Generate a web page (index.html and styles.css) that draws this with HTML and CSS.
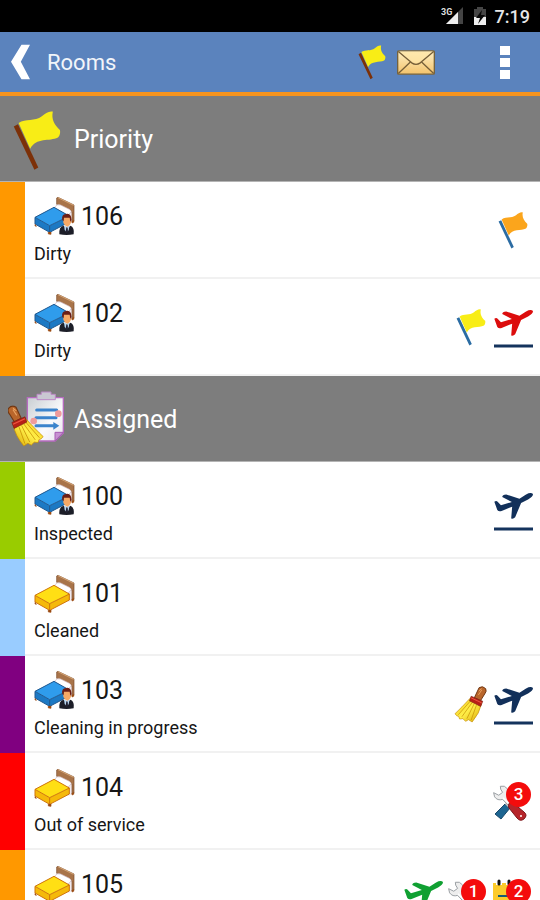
FILE: index.html
```html
<!DOCTYPE html>
<html lang="en">
<head>
<meta charset="utf-8">
<meta name="viewport" content="width=device-width, initial-scale=1">
<title>Rooms</title>
<link rel="stylesheet" href="styles.css">
</head>
<body>
<svg class="defs" aria-hidden="true">
  <defs>
    <linearGradient id="paper" x1="0" y1="0" x2="0" y2="1"><stop offset="0" stop-color="#fff0c4"/><stop offset="1" stop-color="#f3c36c"/></linearGradient>
    <linearGradient id="board" x1="0" y1="0" x2="1" y2="1"><stop offset="0" stop-color="#c9ced2"/><stop offset=".6" stop-color="#fafafc"/><stop offset="1" stop-color="#e8e4ee"/></linearGradient>
    <linearGradient id="straw" x1="0" y1="0" x2="1" y2="1"><stop offset="0" stop-color="#f0c010"/><stop offset=".5" stop-color="#fff04a"/><stop offset="1" stop-color="#d9a400"/></linearGradient>
    <symbol id="flag" viewBox="36 320 150 186">
      <path class="pole" d="M39 371l13-7 63 134-12 7z"/>
      <path class="cloth" d="M54 360C76 345 104 356 126 339C137 330 148 322 160 325C155 350 165 366 182 382C184 390 182 400 176 405C150 418 108 404 90 440Z"/>
    </symbol>
    <symbol id="bed" viewBox="0 0 126 120">
      <path d="M60 36l12-12 44 22 2 30-14 8z" fill="#f1e9ee"/>
      <path d="M68 6l4-2 48 23v49l-6 2V48L68 25z" fill="#a8744a" stroke="#7c4c2a" stroke-width="2"/>
      <path d="M72 5l47 23" stroke="#d8a878" stroke-width="3"/>
      <path d="M62 33q8-10 18-6l26 13q10 6 2 12l-8 6-36-18z" fill="#fff" stroke="#cdb7c1" stroke-width="2"/>
      <path class="side" d="M3 64l44 25 59-29v18l-59 31L3 84z"/>
      <path class="sheet" d="M3 64l57-30 46 26-59 29z"/>
      <path class="edge" d="M3 64l57-30 46 26-59 29zM3 64v20l44 25 59-31V60M47 89v20" fill="none" stroke-width="3"/>
      <path d="M3 85v5l5 1M43 108v6l8 1v-7M114 75v6l5-2v-6" fill="#9b4b12" stroke="#9b4b12" stroke-width="2"/>
    </symbol>
    <symbol id="guest" viewBox="0 0 48 66">
      <path d="M2 64Q0 42 14 38l10 8 12-8q12 6 9 26-21 4-43 0z" fill="#1c1e28"/>
      <path d="M16 37l8 4 9-4-3 15-6 6-6-7z" fill="#b8d5ef"/>
      <path d="M23 43l4 1 1 12-4 4-3-4z" fill="#223"/>
      <path d="M14 12Q24 4 36 12l1 16q-3 11-11 13-9-2-12-13z" fill="#f6a965"/>
      <path d="M11 22Q7 4 22 3q16-4 17 19l-4 4-2-12q-10 1-17 0l-1 10z" fill="#6b1f17"/>
    </symbol>
    <symbol id="plane" viewBox="0 0 118 82">
      <path d="M1 28q6-5 10 0l10 11 33-10L25 14q0-8 12-8l40 13L97 6q15-8 21-1 0 9-15 16L82 32 64 75q-5 6-12 4l3-36-32 13q-9 3-13-3z"/>
    </symbol>
    <symbol id="broom" viewBox="0 0 100 112">
      <path d="M76 5q11-7 20 3 4 8-3 16L80 45 62 35z" fill="#b9662b" stroke="#703713" stroke-width="3"/>
      <path d="M75 15l9-7M74 27l10-15" stroke="#eaa261" stroke-width="3"/>
      <path d="M49 37Q22 66 3 84q5 8 11 8l3 8 10-1 8 8 9-5 11 7Q78 82 83 54z" fill="url(#straw)" stroke="#c58e09" stroke-width="2"/>
      <path d="M55 50L24 93M61 54L39 99M68 58L52 103M50 45L13 87" stroke="#c38a00" stroke-width="2"/>
      <path d="M52 31l35 15-6 16-34-17z" fill="#b91f17" stroke="#7d2312" stroke-width="2"/>
      <path d="M52 36l32 15" stroke="#ef5842" stroke-width="3"/>
    </symbol>
    <symbol id="wrench" viewBox="0 0 100 100">
      <path d="M23 4Q37 0 45 12q4 12-2 20L83 72l-13 14L30 45q-16 5-25-8L2 24l16 8 12-9-6-10z" fill="#eee" stroke="#969ca0" stroke-width="3"/>
      <path d="M31 40l43 43" stroke="#fff" stroke-width="4"/>
    </symbol>
  </defs>
</svg>

<div class="app">
  <div class="status">
    <svg class="signal" viewBox="0 0 24 20" role="img" aria-label="3G signal">
      <path d="M22 1v17H5z" fill="#444"/><path d="M17 6v12H5z" fill="#eee"/>
      <text x="0" y="9" class="network">3G</text>
    </svg>
    <svg class="battery" viewBox="0 0 14 20" role="img" aria-label="Battery charging">
      <path d="M4 1h6v2h3v16H1V3h3z" fill="#454545"/><path d="M1 11h12v8H1z" fill="#eee"/><path d="M9 4L3 12h4l-2 6 7-9H8z" fill="#080808"/>
    </svg>
    <time>7:19</time>
  </div>

  <header class="bar">
    <button class="back" aria-label="Back"><svg viewBox="0 0 58 106"><path d="M32 0h26L30 52l28 54H32L0 52z" fill="#fff"/></svg></button>
    <h1>Rooms</h1>
    <button class="tool" aria-label="Priority"><svg class="flag-small yellow brown"><use href="#flag"/></svg></button>
    <button class="tool" aria-label="Messages">
      <svg class="mail" viewBox="0 0 114 74">
        <rect x="2" y="2" width="110" height="70" rx="3" fill="url(#paper)" stroke="#74623e" stroke-width="4"/>
        <path d="M8 4h98L69 34q-12 9-24 0z" fill="#ffe5a5" opacity=".7"/>
        <path d="M4 70l37-35M110 70L73 35M4 4l40 34q13 9 26 0l40-34" fill="none" stroke="#765f38" stroke-width="4"/>
      </svg>
    </button>
    <button class="tool menu" aria-label="More options"><svg viewBox="0 0 10 33"><path d="M0 0h10v9H0zM0 12h10v9H0zM0 24h10v9H0z" fill="#fff"/></svg></button>
  </header>

  <main class="list">
    <section>
      <h2 class="group"><svg class="group-icon yellow brown"><use href="#flag"/></svg>Priority</h2>
      <ul>
        <li class="room orange">
          <div class="info">
            <h3><svg class="bed blue" viewBox="0 0 126 120"><use href="#bed" width="126" height="120"/><use href="#guest" x="74" y="50" width="48" height="68"/></svg>106</h3>
            <p>Dirty</p>
          </div>
          <div class="marks"><svg class="mark amber steel"><use href="#flag" x="6" y="0" width="30" height="38"/></svg></div>
        </li>
        <li class="room orange">
          <div class="info">
            <h3><svg class="bed blue" viewBox="0 0 126 120"><use href="#bed" width="126" height="120"/><use href="#guest" x="74" y="50" width="48" height="68"/></svg>102</h3>
            <p>Dirty</p>
          </div>
          <div class="marks">
            <svg class="mark yellow steel"><use href="#flag" x="9" y="0" width="30" height="38"/></svg>
            <svg class="mark leaving"><use href="#plane" x="2" y="1" width="39" height="28"/><path class="runway" d="M2 38h39"/></svg>
          </div>
        </li>
      </ul>
    </section>

    <section>
      <h2 class="group">
        <svg class="group-icon" viewBox="0 0 174 174">
          <path d="M58 20h108v106l-25 24H58z" fill="url(#board)" stroke="#b66bc0" stroke-width="4"/>
          <path d="M141 150v-26h25z" fill="#c791d2" stroke="#a65cb2" stroke-width="3"/>
          <path d="M87 26V10h13V3h29v7h13v16z" fill="#c9c7d2" stroke="#bc88c6" stroke-width="3"/>
          <path d="M86 57h60M84 80h60M84 104h55" fill="none" stroke="#3b83cc" stroke-width="9" stroke-linecap="round"/>
          <path d="M136 93l18 11-18 12z" fill="#3b83cc"/>
          <circle cx="151" cy="68" r="10" fill="#ef9b9b"/><circle cx="77" cy="90" r="10" fill="#ef9b9b"/>
          <use href="#broom" width="112" height="125" transform="translate(109 43) scale(-1 1)"/>
        </svg>
        Assigned
      </h2>
      <ul>
        <li class="room green">
          <div class="info">
            <h3><svg class="bed blue" viewBox="0 0 126 120"><use href="#bed" width="126" height="120"/><use href="#guest" x="74" y="50" width="48" height="68"/></svg>100</h3>
            <p>Inspected</p>
          </div>
          <div class="marks"><svg class="mark away"><use href="#plane" x="2" y="1" width="39" height="28"/><path class="runway" d="M2 38h39"/></svg></div>
        </li>
        <li class="room sky">
          <div class="info">
            <h3><svg class="bed gold" viewBox="0 0 126 120"><use href="#bed" y="3" width="126" height="120"/></svg>101</h3>
            <p>Cleaned</p>
          </div>
        </li>
        <li class="room purple">
          <div class="info">
            <h3><svg class="bed blue" viewBox="0 0 126 120"><use href="#bed" width="126" height="120"/><use href="#guest" x="74" y="50" width="48" height="68"/></svg>103</h3>
            <p>Cleaning in progress</p>
          </div>
          <div class="marks">
            <svg class="mark"><use href="#broom" x="7" y="1" width="33" height="37"/></svg>
            <svg class="mark away"><use href="#plane" x="2" y="1" width="39" height="28"/><path class="runway" d="M2 38h39"/></svg>
          </div>
        </li>
        <li class="room red">
          <div class="info">
            <h3><svg class="bed gold" viewBox="0 0 126 120"><use href="#bed" y="3" width="126" height="120"/></svg>104</h3>
            <p>Out of service</p>
          </div>
          <div class="marks">
            <div class="counted">
              <svg class="mark">
                <path d="M3 32l10-10 5 4-9 11z" fill="#1d6591" stroke="#18486a"/>
                <path d="M13 22l8-9 3 3-8 9z" fill="#ccc"/>
                <use href="#wrench" x="1" y="3" width="32" height="32"/>
                <path d="M17 26q-2-5 3-6l12 10q4 3 0 7-4 3-7-1z" fill="#b7252a" stroke="#7d181c"/><circle cx="29" cy="34" r="1" fill="#fff"/>
              </svg>
              <span class="badge">3</span>
            </div>
          </div>
        </li>
        <li class="room orange">
          <div class="info">
            <h3><svg class="bed gold" viewBox="0 0 126 120"><use href="#bed" y="3" width="126" height="120"/></svg>105</h3>
          </div>
          <div class="marks">
            <svg class="mark arriving"><use href="#plane" x="2" y="1" width="39" height="28"/><path class="runway" d="M2 38h39"/></svg>
            <div class="counted"><svg class="mark"><use href="#wrench" x="1" y="2" width="32" height="32"/></svg><span class="badge">1</span></div>
            <div class="counted">
              <svg class="mark"><path d="M1 4h34v32H1z" fill="#fccb2b"/><path d="M6 17h22M6 24h22" stroke="#155b74" stroke-width="2"/><path d="M7 1v5M17 1v5" stroke="#fff" stroke-width="6"/><path d="M7 2v3M17 2v3" stroke="#111" stroke-width="3" stroke-linecap="round"/></svg>
              <span class="badge">2</span>
            </div>
          </div>
        </li>
      </ul>
    </section>
  </main>
</div>
</body>
</html>
```
FILE: styles.css
```css
* { box-sizing: border-box; }
body, h1, h2, h3, p, ul { margin: 0; padding: 0; font-weight: 400; }
body { font-family: Roboto, "Liberation Sans", sans-serif; color: #161616; background: #fff; }
ul { list-style: none; }
svg { display: block; flex: none; }
.defs { position: absolute; width: 0; height: 0; }

.app { height: 100vh; display: flex; flex-direction: column; overflow: hidden; }

.status {
  flex: none; height: 32px; padding-right: 10px;
  display: flex; align-items: center; justify-content: flex-end;
  background: #000; color: #e6e6e6;
  font-size: 18px; font-weight: 500;
}
.signal { width: 24px; height: 20px; margin-right: 8px; }
.network { font-size: 9px; font-weight: 700; fill: #ddd; }
.battery { width: 14px; height: 20px; margin-right: 8px; }

.bar {
  flex: none; height: 64px; padding-left: 11px;
  display: flex; align-items: center;
  background: #5b83bd; border-bottom: 4px solid #f7941d; color: #fff;
}
.bar h1 { flex: 1; padding-top: 2px; font-size: 22px; line-height: 32px; color: #f2f5fa; }
button { padding: 0; border: 0; background: none; display: flex; align-items: center; justify-content: center; cursor: pointer; }
.back { width: 36px; height: 60px; justify-content: flex-start; }
.back svg { width: 19px; height: 36px; }
.tool { width: 44px; height: 60px; }
.menu { width: 64px; margin: 0 3px 0 35px; }
.menu svg { width: 10px; height: 33px; }
.flag-small { width: 28px; height: 36px; }
.mail { width: 38px; height: 25px; }

.list { flex: 1; min-height: 0; overflow-y: auto; scrollbar-width: none; }
.group {
  height: 86px; padding: 2px 0 0 8px;
  display: flex; align-items: center; gap: 8px;
  background: #7d7d7d; border-bottom: 1px solid #b4b4b4; color: #fff;
  font-size: 25px;
}
.group-icon { width: 58px; height: 60px; }

.room {
  --tone: #ff9800;
  height: 97px; padding-right: 6px;
  display: flex; align-items: center; justify-content: space-between;
  border-left: 25px solid var(--tone);
  box-shadow: inset 0 -2px #f1f1f1;
}
.green { --tone: #99cc00; }
.sky { --tone: #99ccff; }
.purple { --tone: #800080; }
.red { --tone: #ff0000; }
.info { align-self: flex-start; padding: 12px 0 0 9px; }
.info h3 { display: flex; align-items: center; gap: 5px; height: 44px; font-size: 25px; }
.info p { padding-top: 4px; font-size: 18px; line-height: 24px; }
.bed { width: 42px; height: 40px; }
.marks { display: flex; gap: 3px; }
.mark { width: 42px; height: 40px; }
.counted { position: relative; }
.badge {
  position: absolute; top: 0; left: 14px;
  width: 25px; height: 25px; border-radius: 50%;
  background: #f40c0c; color: #fff;
  font-size: 17px; font-weight: 500; line-height: 25px; text-align: center;
}

.yellow { --cloth: #f8ed16; }
.amber { --cloth: #fba51c; }
.brown { --pole: #7c3008; }
.steel { --pole: #2b6ca3; }
.cloth { fill: var(--cloth); }
.pole { fill: var(--pole); }
.blue { --sheet: #2f9cec; --side: #1c79c4; --edge: #20588f; }
.gold { --sheet: #ffdf14; --side: #f5b90a; --edge: #cf740b; }
.sheet { fill: var(--sheet); }
.side { fill: var(--side); }
.edge { stroke: var(--edge); }
.leaving { fill: #dc0d0d; }
.away { fill: #12305a; }
.arriving { fill: #10a032; }
.runway { stroke: #14335d; stroke-width: 3; }
```
